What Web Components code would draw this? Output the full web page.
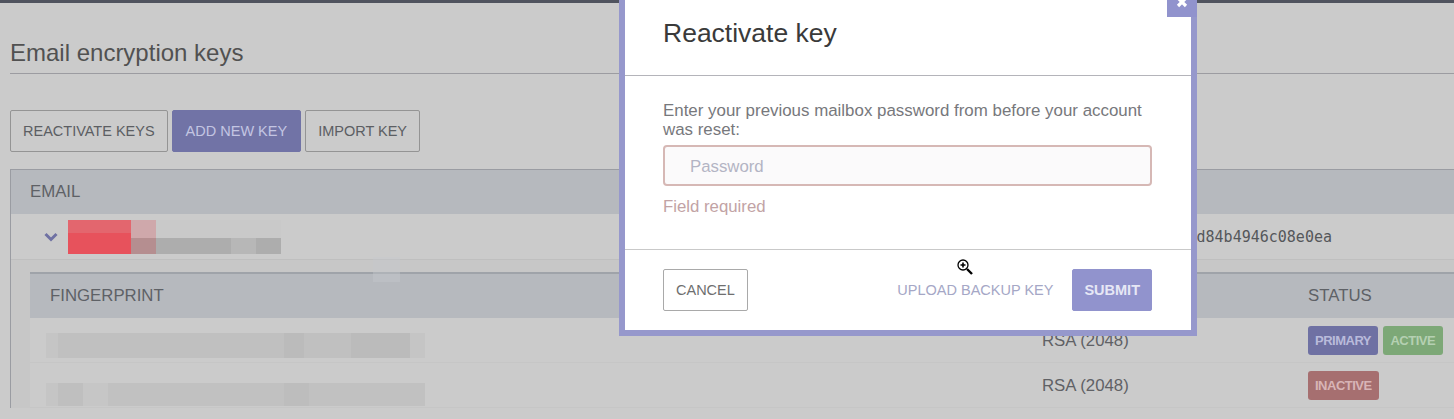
<!DOCTYPE html>
<html lang="en">
<head>
<meta charset="utf-8">
<title>Email encryption keys</title>
<style>
    html, body { margin: 0; height: 100%; overflow: hidden; background: #cbcbcb; }
    body { font-family: "Liberation Sans", Arial, sans-serif; color: #5a5c61; }
</style>
</head>
<body>
<keys-page>
    <span slot="title">Email encryption keys</span>
    <ui-button slot="actions">REACTIVATE KEYS</ui-button>
    <ui-button slot="actions" variant="primary">ADD NEW KEY</ui-button>
    <ui-button slot="actions">IMPORT KEY</ui-button>

    <key-table slot="table">
        <blur-block slot="address" cells="0,0,63,34,#e7525c;0,0,63,13,#e3666e;63,0,25,34,#b58e90;63,0,25,18,#cfa8ab;88,18,75,16,#adadad;163,18,25,16,#b7b7b7;188,18,25,16,#adadad;88,0,125,18,#c9c9c9" w="213" h="34"></blur-block>
        <span slot="hash">d84b4946c08e0ea</span>

        <key-row slot="keys">
            <blur-block slot="fingerprint" cells="0,15,12,25,#c5c5c5;12,15,352,25,#c0c0c0;238,15,20,25,#bbbbbb;305,15,59,25,#bbbbbb;364,15,15,25,#c5c5c5" w="379" h="45"></blur-block>
            <span slot="algo">RSA (2048)</span>
            <ui-badge slot="status" tone="primary">PRIMARY</ui-badge>
            <ui-badge slot="status" tone="active">ACTIVE</ui-badge>
        </key-row>
        <key-row slot="keys">
            <blur-block slot="fingerprint" cells="0,20,12,23,#c5c5c5;12,20,25,23,#bfbfbf;37,20,25,23,#c6c6c6;62,20,317,23,#c1c1c1;238,20,25,23,#bdbdbd" w="379" h="45"></blur-block>
            <span slot="algo">RSA (2048)</span>
            <ui-badge slot="status" tone="inactive">INACTIVE</ui-badge>
        </key-row>
    </key-table>
</keys-page>

<key-modal>
    <span slot="title">Reactivate key</span>
    <span slot="label">Enter your previous mailbox password from before your account was reset:</span>
    <span slot="error">Field required</span>
    <ui-button slot="left" variant="plain">CANCEL</ui-button>
    <ui-button slot="right" variant="link">UPLOAD BACKUP KEY</ui-button>
    <ui-button slot="right" variant="submit">SUBMIT</ui-button>
</key-modal>

<script>
class UiButton extends HTMLElement {
    constructor() {
        super();
        this.attachShadow({ mode: 'open' });
        this.shadowRoot.innerHTML = `
            <style>
                :host {
                    display: inline-flex;
                    align-items: center;
                    box-sizing: border-box;
                    height: 42px;
                    padding: 0 12px;
                    border: 1px solid #949494;
                    border-radius: 2px;
                    font-size: 14.5px;
                    color: #5c5e63;
                    white-space: nowrap;
                }
                :host([variant="primary"]) { background: #7173a6; border-color: #7173a6; color: #c3c5e2; padding: 0 13px; }
                :host([variant="plain"]) { background: #fff; border-color: #a9a9a9; color: #6f6f6f; }
                :host([variant="link"]) { border-color: transparent; color: #a5a7c6; padding: 0 18px 0 0; }
                :host([variant="submit"]) { background: #9193cd; border-color: #9193cd; color: #e6e7f5; font-weight: bold; padding: 0 11px; }
            </style>
            <slot></slot>
        `;
    }
}

class UiBadge extends HTMLElement {
    constructor() {
        super();
        this.attachShadow({ mode: 'open' });
        this.shadowRoot.innerHTML = `
            <style>
                :host {
                    display: inline-flex;
                    align-items: center;
                    height: 29px;
                    padding: 0 7.5px 0 7px;
                    border-radius: 3px;
                    font-size: 13px;
                    font-weight: bold;
                    letter-spacing: -0.5px;
                }
                :host([tone="primary"]) { background: #6f71a3; color: #b9bbdb; }
                :host([tone="active"]) { background: #7da877; color: #b5d0b2; }
                :host([tone="inactive"]) { background: #a66f70; color: #d8b4b6; }
            </style>
            <slot></slot>
        `;
    }
}

// Pixelated blocks that hide the private values in the screenshot
class BlurBlock extends HTMLElement {
    connectedCallback() {
        const w = this.getAttribute('w');
        const h = this.getAttribute('h');
        const rects = this.getAttribute('cells').split(';').map(cell => {
            const [x, y, cw, ch, fill] = cell.split(',');
            return `<rect x="${x}" y="${y}" width="${cw}" height="${ch}" fill="${fill}"/>`;
        }).join('');
        this.attachShadow({ mode: 'open' });
        this.shadowRoot.innerHTML = `
            <style>
                :host { display: block; line-height: 0; }
            </style>
            <svg width="${w}" height="${h}" viewBox="0 0 ${w} ${h}">${rects}</svg>
        `;
    }
}

class KeyRow extends HTMLElement {
    constructor() {
        super();
        this.attachShadow({ mode: 'open' });
        this.shadowRoot.innerHTML = `
            <style>
                :host {
                    display: grid;
                    grid-template-columns: 1012px 266px 1fr;
                    align-items: center;
                    height: 45px;
                    box-sizing: border-box;
                    border-bottom: 1px solid #c6c6c6;
                    background: #cbcbcb;
                    font-size: 16.8px;
                    color: #606165;
                }
                .print { padding-left: 16px; }
                .status { display: flex; gap: 5px; }
            </style>
            <div class="print"><slot name="fingerprint"></slot></div>
            <div><slot name="algo"></slot></div>
            <div class="status"><slot name="status"></slot></div>
        `;
    }
}

class KeyTable extends HTMLElement {
    constructor() {
        super();
        this.attachShadow({ mode: 'open' });
        this.shadowRoot.innerHTML = `
            <style>
                :host {
                    display: block;
                    border-left: 1px solid #9a9ca2;
                    border-top: 1px solid #9a9ca2;
                }
                .head {
                    display: flex;
                    align-items: center;
                    height: 44px;
                    padding-left: 19px;
                    background: #b6b9be;
                    font-size: 16.8px;
                    color: #5e6166;
                }
                .row {
                    display: flex;
                    align-items: center;
                    height: 45px;
                    padding: 0 122px 0 33px;
                    border-bottom: 1px solid #bfbfbf;
                }
                .chevron { margin-right: 10px; }
                .hash {
                    margin-left: auto;
                    font: 15px "DejaVu Sans Mono", monospace;
                    color: #55575a;
                }
                .inner { padding: 12px 0 0 19px; background: #c7c7c7; }
                .inner-head {
                    display: grid;
                    grid-template-columns: 1278px 1fr;
                    align-items: center;
                    box-sizing: border-box;
                    height: 46px;
                    padding-left: 20px;
                    border-top: 2px solid #9fa3a9;
                    background: #b6b9be;
                    font-size: 16.8px;
                    color: #5e6166;
                }
                .inner-head span:last-child { margin-left: -20px; }
            </style>
            <div class="head">EMAIL</div>
            <div class="row">
                <svg class="chevron" width="14" height="10" viewBox="0 0 14 10">
                    <path d="M1.5 2 L7 7.5 L12.5 2" fill="none" stroke="#6f71a3" stroke-width="3"/>
                </svg>
                <slot name="address"></slot>
                <span class="hash"><slot name="hash"></slot></span>
            </div>
            <div class="inner">
                <div class="inner-head"><span>FINGERPRINT</span><span>STATUS</span></div>
                <slot name="keys"></slot>
            </div>
        `;
    }
}

class KeysPage extends HTMLElement {
    constructor() {
        super();
        this.attachShadow({ mode: 'open' });
        this.shadowRoot.innerHTML = `
            <style>
                :host { display: block; border-top: 3px solid #50545f; }
                .content { padding: 36px 0 0 10px; }
                h1 {
                    margin: 0 0 36px;
                    padding-bottom: 6px;
                    border-bottom: 1px solid #9c9ca1;
                    font-size: 24px;
                    line-height: 28px;
                    font-weight: normal;
                    color: #515151;
                }
                .actions { display: flex; gap: 4px; margin-bottom: 17px; }
                /* small smudge over the table, it is in the screenshot too */
                .smudge {
                    position: absolute;
                    left: 373px;
                    top: 257px;
                    width: 27px;
                    height: 25px;
                    background: rgba(198, 200, 204, 0.4);
                }
            </style>
            <div class="content">
                <h1><slot name="title"></slot></h1>
                <div class="actions"><slot name="actions"></slot></div>
                <slot name="table"></slot>
            </div>
            <div class="smudge"></div>
        `;
    }
}

class KeyModal extends HTMLElement {
    constructor() {
        super();
        this.attachShadow({ mode: 'open' });
        this.shadowRoot.innerHTML = `
            <style>
                :host {
                    position: absolute;
                    left: 619px;
                    top: -6px;
                    width: 578px;
                    box-sizing: border-box;
                    border: 6px solid #9698cc;
                    background: #fff;
                }
                .close {
                    position: absolute;
                    top: 0;
                    right: -6px;
                    width: 30px;
                    height: 17px;
                    background: #9193cd;
                }
                header {
                    height: 76px;
                    box-sizing: border-box;
                    padding: 17px 38px 0;
                    border-bottom: 1px solid #b4b4ba;
                }
                h2 {
                    margin: 0;
                    font-size: 26.5px;
                    line-height: 32px;
                    font-weight: normal;
                    color: #3a3a3a;
                }
                .body { padding: 25px 39px 32px 38px; }
                label {
                    display: block;
                    margin-bottom: 6px;
                    font-size: 16.9px;
                    line-height: 19px;
                    color: #77787c;
                }
                input {
                    display: block;
                    width: 100%;
                    height: 41px;
                    box-sizing: border-box;
                    padding: 2px 25px 0;
                    border: 2px solid #d6b8b5;
                    border-radius: 4px;
                    background: #fbfafb;
                    font: 16.8px "Liberation Sans", Arial, sans-serif;
                    outline: none;
                    -webkit-appearance: none;
                    appearance: none;
                }
                input:invalid, input:focus { border-color: #d6b8b5; }
                input::placeholder { color: #b3b4c4; opacity: 1; }
                .error {
                    margin-top: 11px;
                    font-size: 16.8px;
                    line-height: 20px;
                    color: #c2a3a5;
                }
                footer {
                    display: flex;
                    justify-content: space-between;
                    padding: 19px 39px 19px 38px;
                    border-top: 1px solid #c9c9c9;
                }
                .cursor { position: absolute; left: 331px; top: 258px; }
            </style>
            <div class="close">
                <svg width="30" height="17" viewBox="0 0 30 17">
                    <path d="M11 -2 L19 6 M19 -2 L11 6" stroke="#fff" stroke-width="3.2"/>
                </svg>
            </div>
            <header><h2><slot name="title"></slot></h2></header>
            <div class="body">
                <label><slot name="label"></slot></label>
                <input type="password" placeholder="Password">
                <div class="error"><slot name="error"></slot></div>
            </div>
            <footer>
                <div><slot name="left"></slot></div>
                <div><slot name="right"></slot></div>
            </footer>
            <svg class="cursor" width="18" height="18" viewBox="0 0 18 18">
                <path d="M11 11 L16 16" stroke="#000" stroke-width="2.4"/>
                <circle cx="7" cy="7" r="5" fill="#fff" stroke="#000" stroke-width="1.3"/>
                <path d="M4.5 7 H9.5 M7 4.5 V9.5" stroke="#000" stroke-width="1.6"/>
            </svg>
        `;
    }
}

customElements.define('ui-button', UiButton);
customElements.define('ui-badge', UiBadge);
customElements.define('blur-block', BlurBlock);
customElements.define('key-row', KeyRow);
customElements.define('key-table', KeyTable);
customElements.define('keys-page', KeysPage);
customElements.define('key-modal', KeyModal);
</script>
</body>
</html>
